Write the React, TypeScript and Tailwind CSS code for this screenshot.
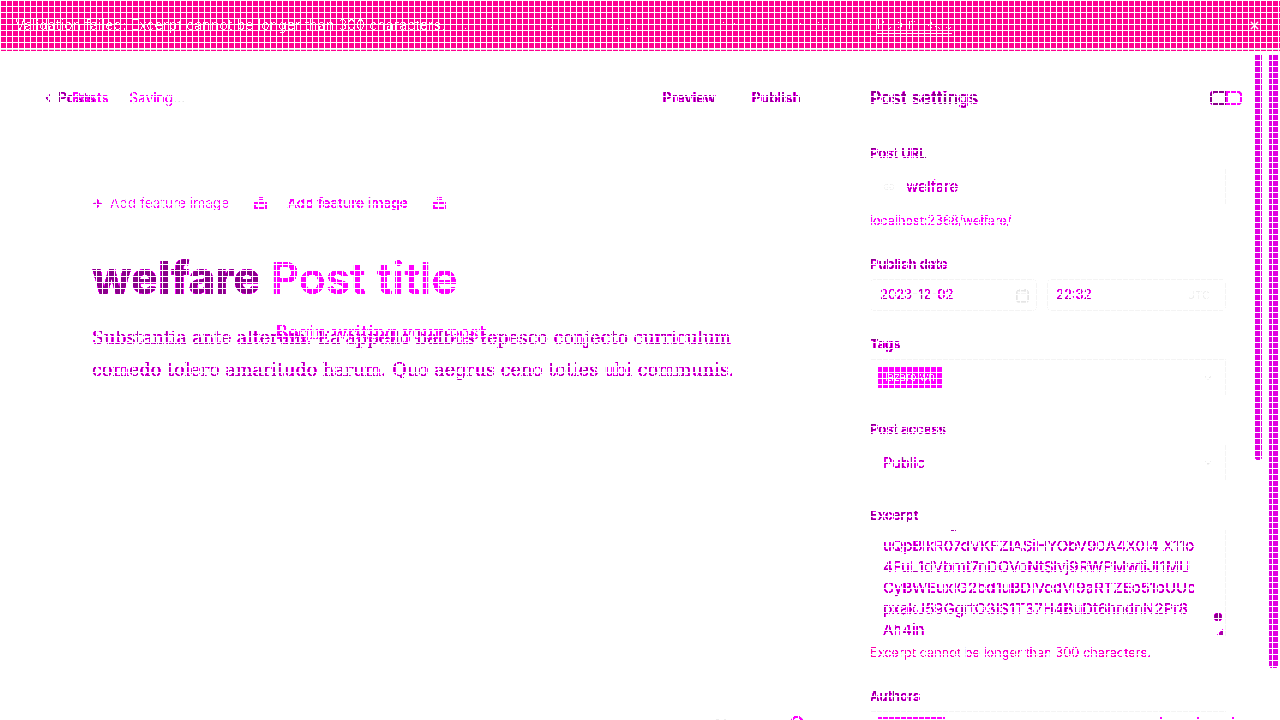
import React from "react";
import { ChevronDown, ChevronLeft, Plus, X, Calendar, Link2 } from "lucide-react";

// the reference is posterised: dark greys come out purple, mid greys magenta, near white stays
const toneRB = [
  ...Array(7).fill(0.545),
  ...Array(6).fill(0.66),
  ...Array(7).fill(0.88),
  ...Array(8).fill(1),
  0.9,
  0.93,
  0.96,
  1,
].join(" ");
const toneG = [...Array(28).fill(0), 0.9, 0.93, 0.96, 1].join(" ");

const Filters = () => (
  <svg className="absolute h-0 w-0">
    <defs>
      <filter id="posterize" colorInterpolationFilters="sRGB" x="0" y="0" width="100%" height="100%">
        <feComponentTransfer>
          <feFuncR type="discrete" tableValues={toneRB} />
          <feFuncG type="discrete" tableValues={toneG} />
          <feFuncB type="discrete" tableValues={toneRB} />
        </feComponentTransfer>
      </filter>
      <filter id="crisp" colorInterpolationFilters="sRGB">
        <feComponentTransfer>
          <feFuncA type="discrete" tableValues="0 0 1" />
        </feComponentTransfer>
      </filter>
      <filter id="sparse" colorInterpolationFilters="sRGB">
        <feComponentTransfer>
          <feFuncA type="discrete" tableValues="0 0 0 0 0 0 1" />
        </feComponentTransfer>
      </filter>
    </defs>
  </svg>
);

const Label = ({ children, className = "" }: { children: React.ReactNode; className?: string }) => (
  <div className={`text-[13px] leading-4 font-semibold text-[#26282b] ${className}`}>{children}</div>
);

const excerpt = [
  "uQpBlkR07dVKFZlASiHYObV90A4X0I4 X11o",
  "4FuL1dVbmt7nDOVoNtSlvj9RWPMwtiJI1MU",
  "CyBWEuxlG2bd1uBDlVedVl9aRTZEo51oUUc",
  "pxakJ59GgrtO3IS1T37H4BuDt6hndnN2Pr8",
  "Ah4in",
];

const ImageIcon = ({ className = "" }: { className?: string }) => (
  <svg viewBox="0 0 13 12" className={`w-[13px] h-3 ${className}`} fill="currentColor">
    <rect x="4" y="0" width="5" height="3" />
    <path d="M0 5h13v7H0zM2 7v3h9V7z" fillRule="evenodd" />
  </svg>
);

export default function App() {
  return (
    <div className="relative h-[720px] w-[1280px] overflow-hidden bg-white font-['Inter',sans-serif]">
      <Filters />
      {/* error banner */}
      <div className="flex h-[49px] items-center bg-[#ff0090] pl-[15px] pr-[19px] pt-[1px] text-[14.3px] text-white">
        <span className="[filter:url(#crisp)]">Validation failed: Excerpt cannot be longer than 300 characters.</span>
        <span className="ml-[6px] font-extralight [filter:url(#sparse)]">Validation failed: Excerpt cannot be longer than 300 characters.</span>
        <span className="ml-auto mr-[296px] border-b border-white text-[13px] leading-[17px] font-light [filter:url(#sparse)]">Report issue</span>
        <X size={13} strokeWidth={2.5} />
      </div>
      <div className="h-px bg-[#dddddd]" />
      <div className="h-px bg-[#ff0090]" />

      <div className="flex h-[669px] items-start bg-white [filter:url(#posterize)]">
        {/* editor */}
        <div className="w-[870px] shrink-0 pt-[37px]">
          <div className="relative flex h-5 items-center text-[13.8px] font-semibold text-[#15171a]">
            <ChevronLeft size={12} strokeWidth={2.5} className="ml-[42px]" />
            <span className="ml-[4px]">Posts</span>
            <span className="absolute left-[72px] text-[#a0a0a0]">Posts</span>
            <span className="ml-[34px] font-normal text-[#a8a8a8]">
              Saving<span className="text-[#d8d8d8]">...</span>
            </span>
            <span className="ml-auto">Preview</span>
            <span className="ml-[36px] mr-[69px]">Publish</span>
          </div>

          <div className="mt-[85px] flex items-center pl-[92px] text-[13.7px] leading-5">
            <Plus size={11} strokeWidth={3.5} className="text-[#909090]" />
            <span className="ml-[7px] text-[#d0d0d0]">Add feature image</span>
            <ImageIcon className="ml-[25px] text-[#a0a0a0]" />
            <span className="ml-[20px] font-medium text-[#a0a0a0]">Add feature image</span>
            <ImageIcon className="ml-[25px] text-[#a0a0a0]" />
          </div>

          <h1 className="mt-[40px] flex gap-[10px] pl-[92px] leading-[50px]">
            <span className="text-[45.5px] font-extrabold text-[#15171a]">welfare</span>
            <span className="text-[44.3px] font-semibold text-[#b0b0b0]">Post title</span>
          </h1>

          <div className="relative mt-[19px] w-[760px] pl-[92px] font-['DejaVu_Serif',serif] text-[17.6px] leading-8 whitespace-nowrap text-[#3a3a3a]">
            <p>
              <span className="tracking-[-0.09px]">Substantia ante alterum. Ea appello balbus tepesco conjecto curriculum</span>
              <br />
              comedo tolero amaritudo harum. Quo aegrus ceno toties ubi communis.
            </p>
            <span className="absolute left-[275px] -top-[5px] text-[#a0a0a0]">Begin writing your post...</span>
          </div>
        </div>

        {/* settings */}
        <div className="w-[356px] shrink-0 pt-[37px]">
          <div className="relative flex h-5 w-[372px] items-center text-[17.3px] font-semibold text-[#15171a]">
            Post settings
            <div className="ml-auto flex">
              <div className="h-[14px] w-[16px] rounded-l-sm border-2 border-[#15171a]" />
              <div className="h-[14px] w-[16px] rounded-r-sm border-2 border-[#a0a0a0]" />
            </div>
          </div>

          <Label className="mt-[37px]">Post URL</Label>
          <div className="mt-[8px] flex h-[36px] items-center border-r border-[#f4f4f4] pl-[13px] text-[15px] text-[#3a3a3a]">
            <Link2 size={12} className="text-[#eeeeee]" />
            <span className="ml-[11px]">welfare</span>
          </div>
          <div className="mt-[8px] text-[12.6px] leading-4 text-[#a0a0a0]">localhost:2368/welfare/</div>

          <Label className="mt-[27px]">Publish date</Label>
          <div className="mt-[7px] flex gap-[10px] text-[13px] text-[#606060]">
            <div className="flex h-[32px] w-[167px] items-center justify-between rounded-sm border border-[#f4f4f4] pl-[9px] pr-[6px]">
              2023-12-02
              <Calendar size={15} className="text-[#e0e0e0]" />
            </div>
            <div className="flex h-[32px] flex-1 items-center justify-between rounded-sm border border-[#f4f4f4] pl-[8px] pr-[15px]">
              22:32
              <span className="text-[11px] text-[#eeeeee]">UTC</span>
            </div>
          </div>

          <Label className="mt-[25px]">Tags</Label>
          <div className="mt-[7px] flex h-[36px] items-center justify-between border-t border-r border-[#f4f4f4] pl-[8px] pr-[12px]">
            <span className="flex h-[21px] w-[64px] items-center justify-center bg-[#b0b0b0] text-[11px] text-white">lazaro wn</span>
            <ChevronDown size={10} className="text-[#d0d0d0]" />
          </div>

          <Label className="mt-[26px]">Post access</Label>
          <div className="mt-[8px] flex h-[36px] items-center justify-between border-r border-[#f4f4f4] pl-[13px] pr-[12px] text-[14.5px] text-[#3a3a3a]">
            Public
            <ChevronDown size={10} className="text-[#d0d0d0]" />
          </div>

          <Label className="mt-[26px]">Excerpt</Label>
          <div className="relative mt-[7px] h-[107px] overflow-hidden border-r border-[#f4f4f4] pl-[13px] pt-[5px] text-[15px] leading-[21px] whitespace-nowrap text-[#3a3a3a]">
            {excerpt.map((line) => (
              <div key={line}>{line}</div>
            ))}
            <span className="absolute top-0 left-[81px] h-px w-[5px] bg-[#404040]" />
            <span className="absolute right-[3px] bottom-[16px] h-2 w-2 rounded-full bg-[#303030]" />
            <span className="absolute right-[2px] bottom-[2px] h-[6px] w-[6px] bg-[#606060] [clip-path:polygon(100%_0,100%_100%,0_100%)]" />
          </div>
          <div className="mt-[8px] text-[12.75px] leading-4 text-[#b3b34d]">Excerpt cannot be longer than 300 characters.</div>

          <Label className="mt-[27px]">Authors</Label>
          <div className="relative mt-[7px] h-[36px] border-t border-[#f4f4f4] pl-[8px] pt-[5px]">
            <div className="h-[2px] w-[67px] bg-[#b0b0b0]" />
            <span className="absolute left-[290px] top-[5px] h-[2px] w-[2px] bg-[#a0a0a0]" />
            <span className="absolute left-[327px] top-[5px] h-[2px] w-[2px] bg-[#a0a0a0]" />
            <span className="absolute left-[362px] top-[5px] h-[2px] w-[2px] bg-[#a0a0a0]" />
          </div>
        </div>

        {/* scrollbars */}
        <div className="ml-[29px] mt-[4px] h-[405px] w-[7px] rounded-b-sm bg-[#808080]" />
        <div className="ml-[7px] mt-[4px] h-[613px] w-[9px] rounded-b-sm bg-[#808080]" />

        {/* bottom bar, only its top edge is on screen */}
        <span className="absolute left-[716px] top-[668px] h-px w-[3px] bg-[#eeeeee]" />
        <span className="absolute left-[724px] top-[668px] h-px w-[3px] bg-[#eeeeee]" />
        <span className="absolute left-[790px] top-[665px] h-[14px] w-[14px] rounded-full border-2 border-[#a0a0a0]" />
      </div>

      {/* debug grid laid over the whole page */}
      <div className="pointer-events-none absolute inset-0 bg-[linear-gradient(to_right,#fff_1px,transparent_1px),linear-gradient(to_bottom,#fff_1px,transparent_1px)] bg-[size:6px_6px]" />
    </div>
  );
}
